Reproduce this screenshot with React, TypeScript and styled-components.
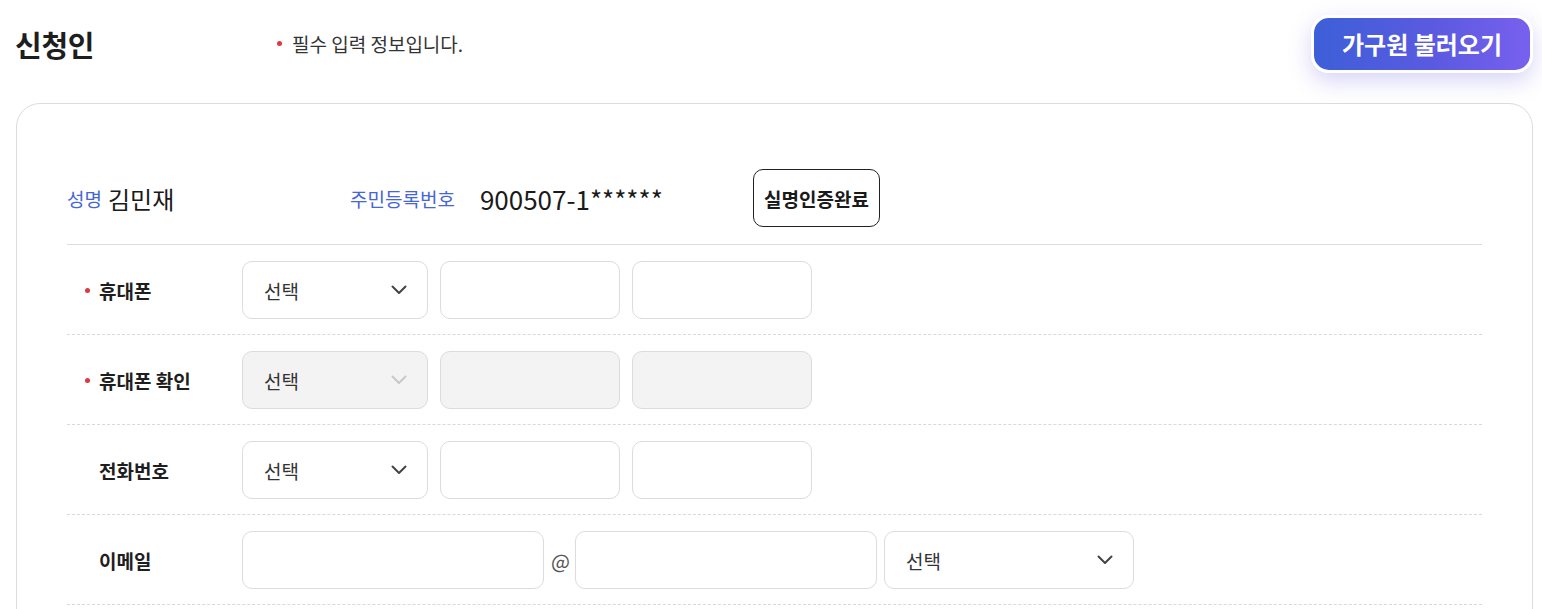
import styled, { createGlobalStyle } from "styled-components";

const GlobalStyle = createGlobalStyle`
  body {
    margin: 0;
    background: #fff;
    font-family: "Noto Sans CJK KR", "Noto Sans", sans-serif;
    color: #222;
  }
  * { box-sizing: border-box; }
`;

const Chevron = ({ disabled }: { disabled?: boolean }) => (
  <svg width="16" height="10" viewBox="0 0 16 10" fill="none">
    <path
      d="M1.5 1.5L8 8L14.5 1.5"
      stroke={disabled ? "#c8c8c8" : "#444"}
      strokeWidth="2"
      strokeLinecap="round"
      strokeLinejoin="round"
    />
  </svg>
);

type FieldRow = {
  label: string;
  required?: boolean;
  disabled?: boolean;
};

const phoneRows: FieldRow[] = [
  { label: "휴대폰", required: true },
  { label: "휴대폰 확인", required: true, disabled: true },
  { label: "전화번호" },
];

const App = () => {
  return (
    <>
      <GlobalStyle />
      <Page>
        <Header>
          <Title>신청인</Title>
          <RequiredNote>필수 입력 정보입니다.</RequiredNote>
          <LoadButton>가구원 불러오기</LoadButton>
        </Header>

        <Card>
          <IdentityRow>
            <IdentityItem>
              <IdentityLabel>성명</IdentityLabel>
              <IdentityValue>김민재</IdentityValue>
            </IdentityItem>
            <IdentityItem $width={403}>
              <IdentityLabel>주민등록번호</IdentityLabel>
              <IdentityValue $gap={25} $digits>
                900507-1******
              </IdentityValue>
            </IdentityItem>
            <VerifyButton>실명인증완료</VerifyButton>
          </IdentityRow>

          {phoneRows.map((row) => (
            <Row key={row.label}>
              <Label $required={row.required}>{row.label}</Label>
              <Fields>
                <Select $width={186} $disabled={row.disabled}>
                  <span>선택</span>
                  <Chevron disabled={row.disabled} />
                </Select>
                <Input $width={180} $disabled={row.disabled} />
                <Input $width={180} $disabled={row.disabled} />
              </Fields>
            </Row>
          ))}

          <Row>
            <Label>이메일</Label>
            <Fields $gap={7}>
              <Input $width={302} />
              <At>@</At>
              <Input $width={302} />
              <Select $width={250}>
                <span>선택</span>
                <Chevron />
              </Select>
            </Fields>
          </Row>
          <Spacer />
        </Card>
      </Page>
    </>
  );
};

const Page = styled.div`
  padding: 15px 9px 0 15px;
`;

const Header = styled.div`
  display: flex;
  align-items: center;
  height: 58px;
`;

const Title = styled.h1`
  width: 262px;
  margin: 0;
  font-size: 29px;
  font-weight: 700;
  color: #1e1e1e;
  letter-spacing: -0.3px;
`;

const RequiredNote = styled.span`
  display: flex;
  align-items: center;
  font-size: 19px;
  color: #333;
  margin-top: -2px;

  &::before {
    content: "";
    width: 5px;
    height: 5px;
    border-radius: 50%;
    background: #e0383e;
    margin-right: 10px;
  }
`;

const LoadButton = styled.button`
  margin-left: auto;
  height: 58px;
  padding: 0 28px 2px;
  border: 3px solid #fff;
  border-radius: 18px;
  background: linear-gradient(90deg, #3d5fd8 0%, #5a5ae0 55%, #7860ef 100%);
  box-shadow: 0 8px 22px rgba(110, 100, 220, 0.28);
  color: #fff;
  font-family: inherit;
  font-size: 24px;
  font-weight: 700;
`;

const Card = styled.div`
  margin-top: 30px;
  margin-left: 1px;
  border: 1px solid #dcdcdc;
  border-radius: 24px;
  padding: 49px 50px 0 50px;
`;

const IdentityRow = styled.div`
  display: flex;
  align-items: center;
  padding: 16px 0 17px;
  border-bottom: 1px solid #dcdcdc;
`;

const IdentityItem = styled.div<{ $width?: number }>`
  display: flex;
  align-items: center;
  width: ${(p) => p.$width ?? 283}px;
`;

const IdentityLabel = styled.span`
  font-size: 19px;
  color: #4466d6;
`;

const IdentityValue = styled.span<{ $gap?: number; $digits?: boolean }>`
  margin-left: ${(p) => p.$gap ?? 6}px;
  font-size: ${(p) => (p.$digits ? 26 : 24)}px;
  color: #1a1a1a;
`;

const VerifyButton = styled.button`
  height: 58px;
  padding: 0 10px;
  border: 1px solid #222;
  border-radius: 10px;
  background: #fff;
  font-family: inherit;
  font-size: 19px;
  font-weight: 700;
  color: #1a1a1a;
`;

const Row = styled.div`
  display: grid;
  grid-template-columns: 175px 1fr;
  align-items: center;
  padding: 16px 0 15px;
  border-bottom: 1px dashed #d9d9d9;
`;

const Label = styled.div<{ $required?: boolean }>`
  display: flex;
  align-items: center;
  padding-left: ${(p) => (p.$required ? 18 : 32)}px;
  font-size: 19px;
  font-weight: 700;
  color: #1e1e1e;

  &::before {
    content: "";
    display: ${(p) => (p.$required ? "block" : "none")};
    width: 5px;
    height: 5px;
    border-radius: 50%;
    background: #e0383e;
    margin-right: 9px;
  }
`;

const Fields = styled.div<{ $gap?: number }>`
  display: flex;
  align-items: center;
  gap: ${(p) => p.$gap ?? 12}px;
`;

const Input = styled.div<{ $width: number; $disabled?: boolean }>`
  width: ${(p) => p.$width}px;
  height: 58px;
  border: 1px solid #dcdcdc;
  border-radius: 10px;
  background: ${(p) => (p.$disabled ? "#f3f3f3" : "#fff")};
`;

const Select = styled.div<{ $width: number; $disabled?: boolean }>`
  display: flex;
  align-items: center;
  justify-content: space-between;
  width: ${(p) => p.$width}px;
  height: 58px;
  padding: 0 20px 0 21px;
  border: 1px solid #dcdcdc;
  border-radius: 10px;
  background: ${(p) => (p.$disabled ? "#f3f3f3" : "#fff")};
  font-size: 19px;
  color: #333;
`;

const At = styled.span`
  width: 17px;
  text-align: center;
  font-size: 20px;
  color: #555;
`;

const Spacer = styled.div`
  height: 60px;
`;

export default App;
